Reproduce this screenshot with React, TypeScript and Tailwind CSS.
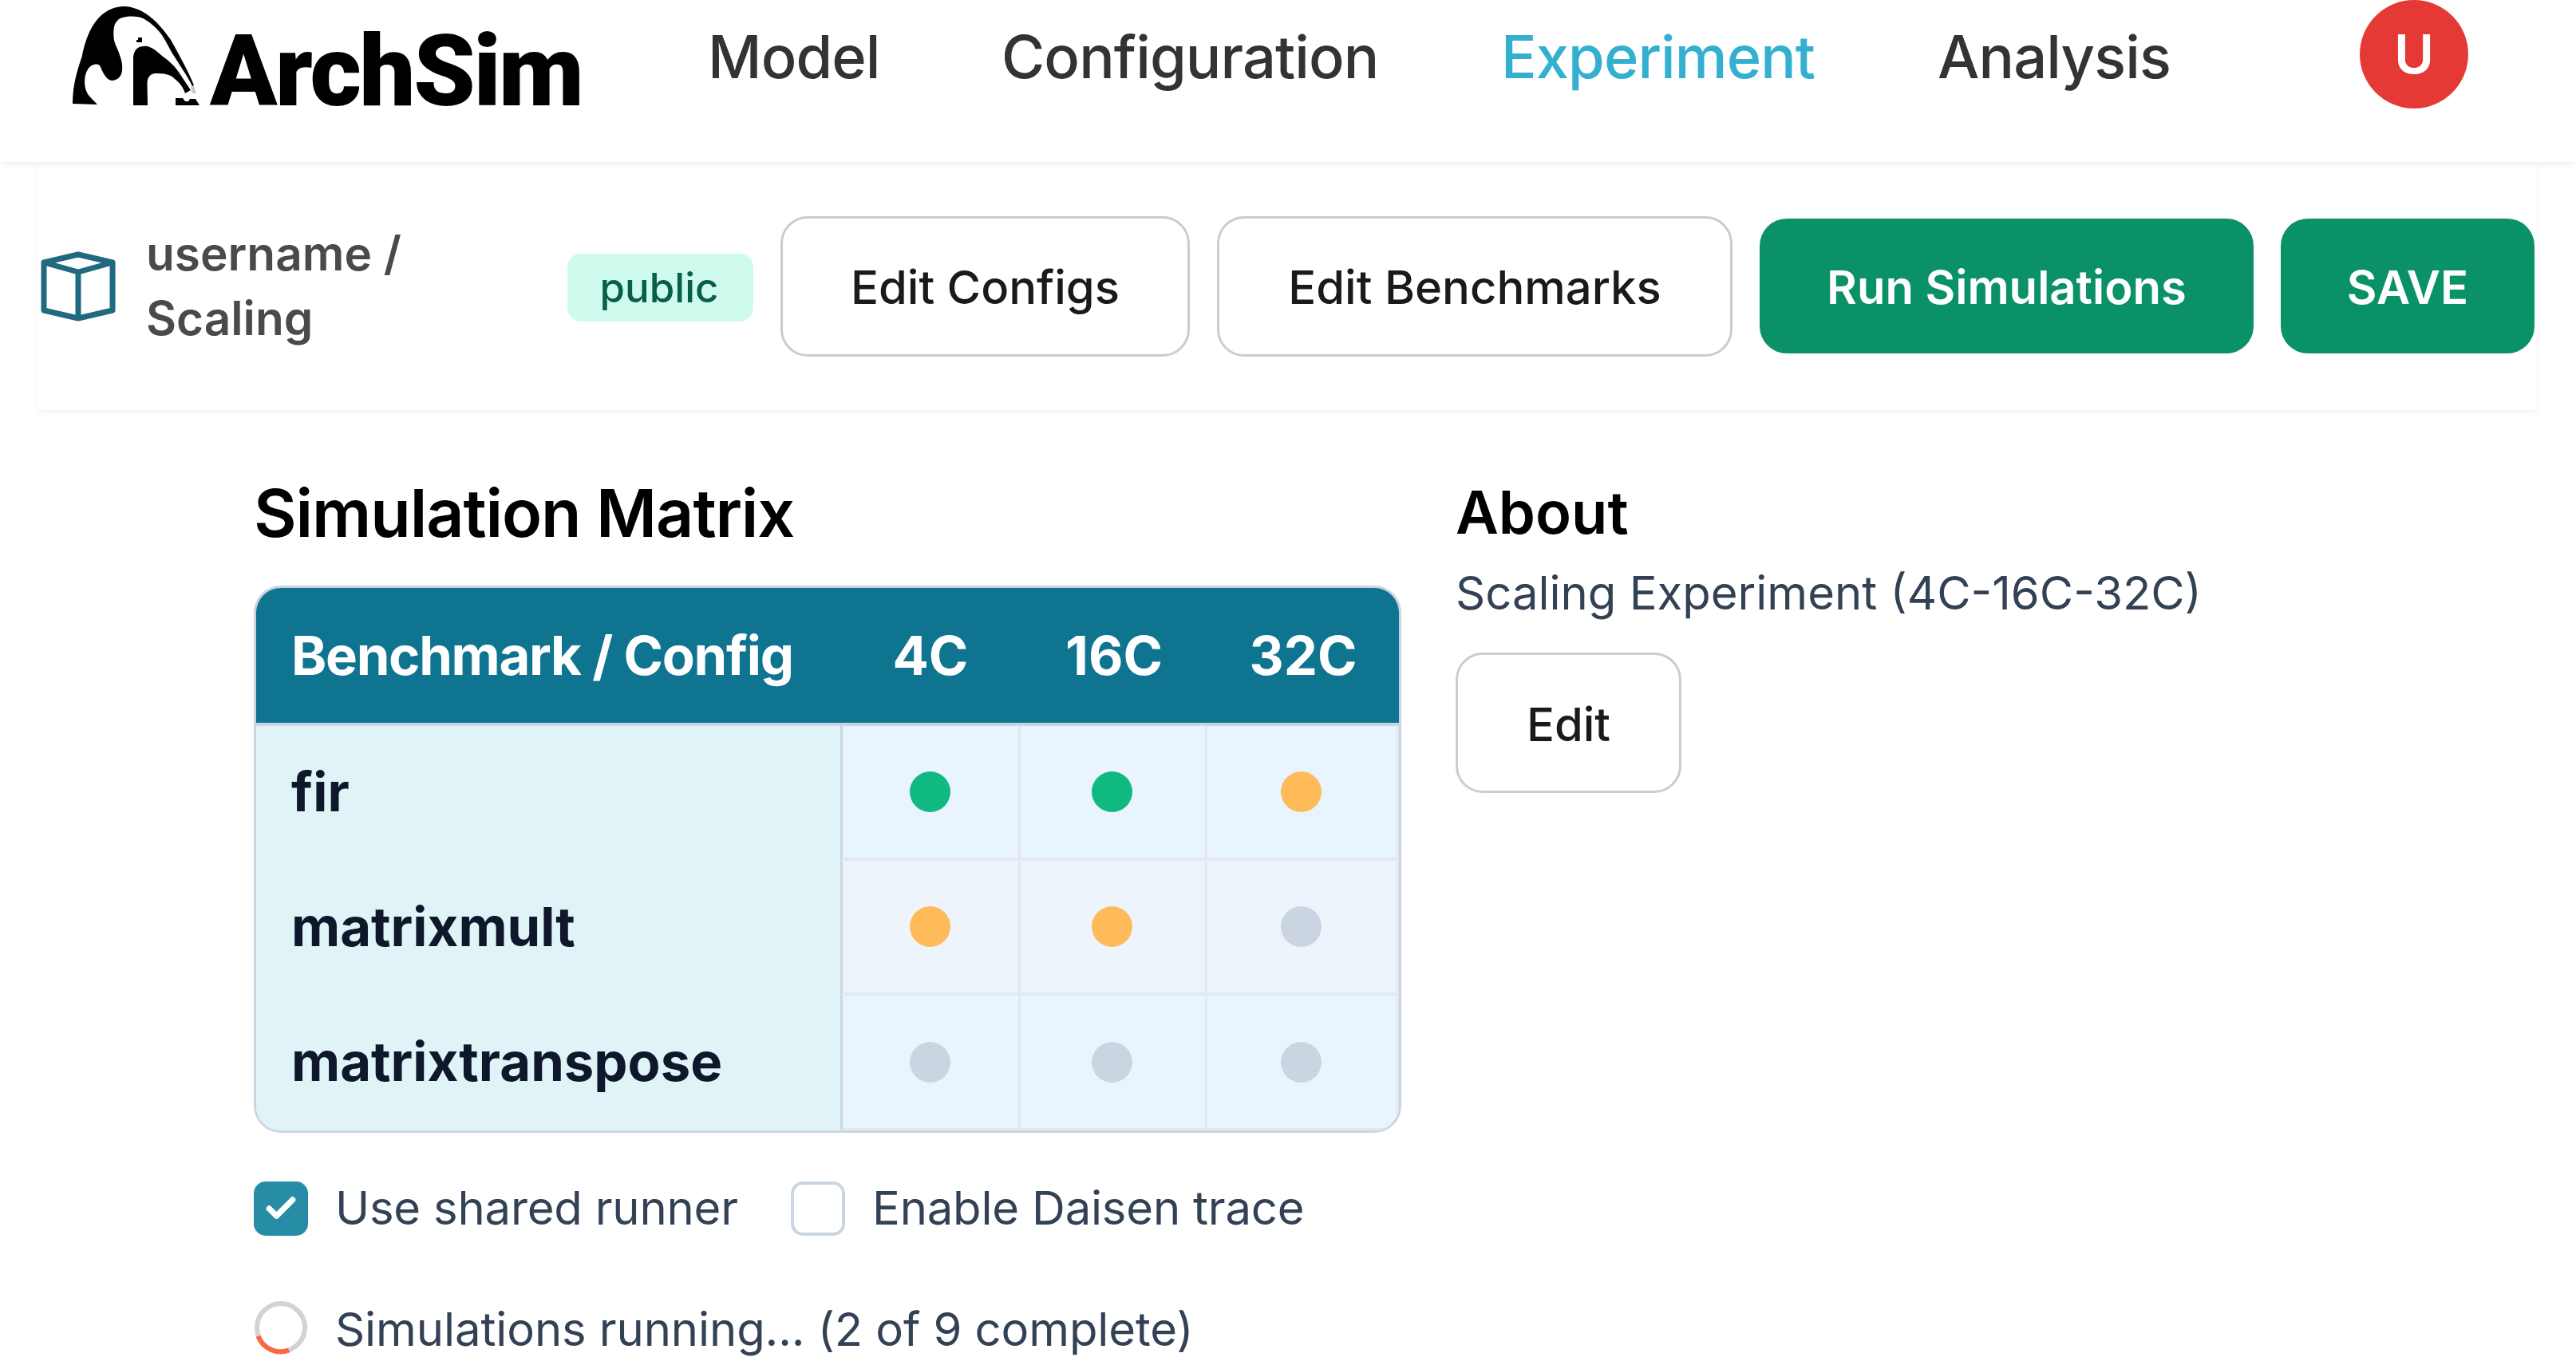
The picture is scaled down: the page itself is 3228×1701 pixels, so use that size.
import type { ReactNode } from 'react';
import { Check } from 'lucide-react';

type RunState = 'done' | 'running' | 'queued';

const DOT_COLORS: Record<RunState, string> = {
  done: 'bg-[#10b981]',
  running: 'bg-[#ffbb5a]',
  queued: 'bg-[#cbd5e1]',
};

const CONFIGS = ['4C', '16C', '32C'];

const ROWS: { name: string; runs: RunState[] }[] = [
  { name: 'fir', runs: ['done', 'done', 'running'] },
  { name: 'matrixmult', runs: ['running', 'running', 'queued'] },
  { name: 'matrixtranspose', runs: ['queued', 'queued', 'queued'] },
];

function Logo() {
  return (
    <div className="flex h-[136px] w-[790px] shrink-0 items-start pl-[91px]">
      <svg className="mt-[8px] h-[124px] w-[159px]" viewBox="91 8 159 124" aria-hidden>
        {/* head and back */}
        <path d="M91 130 C91 108 96 90 103 70 C107 50 118 8 157 8 C184 10 202 33 214 50 C227 73 238 94 243 107 L241 108 C236 97 224 80 216 67 C212 60 207 50 203 44 C194 32 186 27 181 24 C172 19 155 20 149 24 C143 29 142 34 142.500 47 C143 54 147 60 149 66 C152 75 154 80 153 89 C152 96 147 101 140 101 C133 100 129 91 125 82 C122 79 114 80 110 87 C105 95 105 108 109 116 C112 122 118 126 122 131 Z" />
        {/* wing */}
        <path d="M167 131 V72 C168 62 173 58 180 58 C187 57 194 62 203 70 C213 77 220 84 225 92 L239 113 L232 117 C229 108 224 103 218 98 C213 93 206 92 194 92 C188 93 184 97 184.500 107 L185 132 H167 Z" />
        <path d="M173 47 h5 v6 h-7 v-3 h2z M220 123 h9 l3 4 h4 l2 -3 h7 l5 8 h-30z" />
        <path d="M239 108 h4 l3 9 h-5z" fill="#c8c8c8" />
      </svg>
      <span className="mt-[46px] ml-[13px] font-['Roboto'] text-[124px] leading-[88px] font-black tracking-[-2.4px] text-black">
        ArchSim
      </span>
    </div>
  );
}

function Header() {
  return (
    <header className="flex h-[203px] items-start shadow-[0_4px_8px_rgba(0,0,0,0.06)]">
      <Logo />
      <nav className="mt-[26px] ml-[97px] flex w-[2070px] text-[74px] leading-[90px] font-medium tracking-[-0.9px] text-[#333333]">
        <span className="w-[368px]">Model</span>
        <span className="w-[626px]">Configuration</span>
        <span className="w-[547px] text-[#33b0d0]">Experiment</span>
        <span>Analysis</span>
      </nav>
      <div className="grid size-[136px] place-items-center rounded-full bg-[#e53935] pb-[3px] text-[68px] font-semibold text-white">
        U
      </div>
    </header>
  );
}

function Button({ primary = false, children, className }: { primary?: boolean; children: ReactNode; className: string }) {
  const look = primary
    ? 'h-[169px] bg-[#0a9168] font-semibold text-white'
    : 'h-[176px] border-[3px] border-[#cccccc] bg-white font-medium text-[#1a1a1a]';
  return (
    <button
      className={`flex shrink-0 items-center justify-center rounded-[34px] pt-[3px] whitespace-nowrap ${look} ${className}`}
    >
      {children}
    </button>
  );
}

function Toolbar() {
  return (
    <div className="mr-[49px] ml-[46px] flex h-[311px] items-center gap-[34px] pl-[5px] shadow-[0_4px_8px_rgba(0,0,0,0.05)]">
      <div className="flex w-[626px] shrink-0 items-center">
        <svg
          className="h-[88px] w-[94px]"
          viewBox="0 0 94 88"
          fill="none"
          stroke="#1f6a80"
          strokeWidth="7"
          strokeLinejoin="round"
          aria-hidden
        >
          <path d="M4 14 L47 4 L90 14 V74 L47 84 L4 74 Z M4 14 L47 26 L90 14 M47 26 V84" />
        </svg>
        <div className="ml-[38px] pb-[1px] text-[58.5px] leading-[81px] font-semibold text-[#4a4a4a]">
          username /
          <br />
          Scaling
        </div>
      </div>
      <span className="mt-[4px] flex h-[85px] w-[233px] shrink-0 items-center justify-center rounded-[17px] bg-[#cffbee] pr-[3px] text-[51px] font-medium text-[#065f46]">
        public
      </span>
      <Button className="w-[513px]">Edit Configs</Button>
      <Button className="w-[646px]">Edit Benchmarks</Button>
      <Button primary className="w-[619px]">Run Simulations</Button>
      <Button primary className="w-[318px]">SAVE</Button>
    </div>
  );
}

function Matrix() {
  return (
    <div className="overflow-hidden rounded-[34px] border-[3px] border-[#cbd5e1]">
      <div className="grid h-[173px] grid-cols-[732px_226px_234px_1fr] items-center border-b-4 border-[#cbd5e1] bg-[#0f7490] text-center text-[67px] font-bold text-white">
        <span className="pl-[44px] text-left tracking-[-1.3px]">Benchmark / Config</span>
        {CONFIGS.map((config) => (
          <span key={config}>{config}</span>
        ))}
      </div>
      {ROWS.map((row) => (
        <div key={row.name} className="group grid h-[169px] grid-cols-[732px_226px_234px_1fr]">
          <div className="flex items-center bg-[#e0f3f6] pb-[3px] pl-[44px] text-[67px] font-bold text-[#0f172a]">
            {row.name}
          </div>
          {row.runs.map((run, i) => (
            <div
              key={i}
              className="grid place-items-center border-r-[3px] border-b-4 border-[#e2e8f0] bg-[#e8f5ff] pr-[3px] group-odd:bg-[#eef4fc] group-last:border-b-[3px] nth-2:border-l-[3px] nth-2:border-l-[#cbd5e1] nth-2:pr-[1px]"
            >
              <span className={`size-[51px] rounded-full ${DOT_COLORS[run]}`} />
            </div>
          ))}
        </div>
      ))}
    </div>
  );
}

function Spinner() {
  return (
    <svg className="size-[68px]" viewBox="0 0 68 68" fill="none" strokeWidth="6" aria-hidden>
      <circle cx="34" cy="34" r="30" stroke="#d3d3d3" />
      <path d="M5.5 45 A30 30 0 0 0 44 62.5" stroke="#fa6542" />
    </svg>
  );
}

export default function App() {
  return (
    <div className="h-[1701px] w-[3228px] overflow-hidden bg-white font-['Inter',sans-serif] text-[58px] leading-[90px]">
      <Header />
      <Toolbar />
      <main className="flex pt-[78px] pl-[318px]">
        <section className="w-[1438px]">
          <h2 className="h-[142px] text-[82.5px] leading-[102px] font-semibold tracking-[-1.1px] text-black">
            Simulation Matrix
          </h2>
          <Matrix />
          <div className="mt-[61px] flex h-[68px] items-center tracking-[-0.2px] text-[#334155]">
            <span className="grid size-[68px] place-items-center rounded-[15px] bg-[#278ca6]">
              <Check className="size-[44px] text-white" strokeWidth={4} />
            </span>
            <span className="ml-[34px] w-[571px] pb-[3px]">Use shared runner</span>
            <span className="size-[68px] rounded-[15px] border-[4px] border-[#cbd5e1]" />
            <span className="ml-[34px] pb-[3px] whitespace-nowrap">Enable Daisen trace</span>
          </div>
          <div className="mt-[81px] flex h-[68px] items-center tracking-[-0.1px] text-[#334155]">
            <Spinner />
            <span className="ml-[34px] pt-[3px]">Simulations running... (2 of 9 complete)</span>
          </div>
        </section>
        <section className="ml-[68px]">
          <h2 className="h-[106px] text-[74px] leading-[101px] font-semibold text-black">About</h2>
          <p className="text-[#334155]">Scaling Experiment (4C-16C-32C)</p>
          <Button className="mt-[30px] w-[283px]">Edit</Button>
        </section>
      </main>
    </div>
  );
}
